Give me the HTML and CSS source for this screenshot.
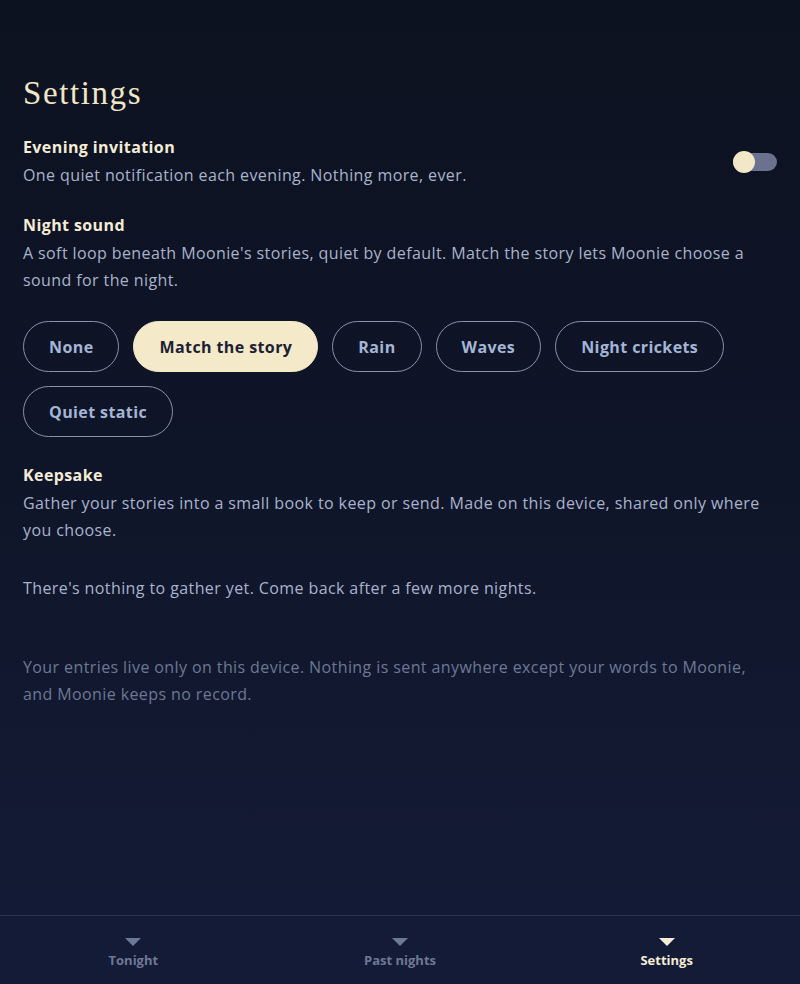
FILE: index.html
```html
<!DOCTYPE html>
<html lang="en">
<head>
<meta charset="utf-8">
<title>Settings</title>
<link rel="stylesheet" href="styles.css">
</head>
<body>
<div class="app">
  <main class="content">
    <h1 class="page-title">Settings</h1>

    <section class="setting setting-row">
      <div class="setting-text">
        <h2 class="setting-title">Evening invitation</h2>
        <p class="setting-desc">One quiet notification each evening. Nothing more, ever.</p>
      </div>
      <div class="toggle" role="switch" aria-checked="false">
        <span class="toggle-knob"></span>
      </div>
    </section>

    <section class="setting">
      <h2 class="setting-title">Night sound</h2>
      <p class="setting-desc">A soft loop beneath Moonie's stories, quiet by default. Match the story lets Moonie choose a sound for the night.</p>
      <div class="chips">
        <button class="chip">None</button>
        <button class="chip chip-active">Match the story</button>
        <button class="chip">Rain</button>
        <button class="chip">Waves</button>
        <button class="chip">Night crickets</button>
        <button class="chip">Quiet static</button>
      </div>
    </section>

    <section class="setting keepsake">
      <h2 class="setting-title">Keepsake</h2>
      <p class="setting-desc">Gather your stories into a small book to keep or send. Made on this device, shared only where you choose.</p>
      <p class="setting-desc empty-note">There's nothing to gather yet. Come back after a few more nights.</p>
    </section>

    <p class="privacy">Your entries live only on this device. Nothing is sent anywhere except your words to Moonie, and Moonie keeps no record.</p>
  </main>

  <nav class="tabbar">
    <a class="tab"><span class="tab-icon"></span><span class="tab-label">Tonight</span></a>
    <a class="tab"><span class="tab-icon"></span><span class="tab-label">Past nights</span></a>
    <a class="tab tab-active"><span class="tab-icon"></span><span class="tab-label">Settings</span></a>
  </nav>
</div>
</body>
</html>
```

FILE: styles.css
```css
* { box-sizing: border-box; }

html, body {
  margin: 0;
  padding: 0;
}

body {
  font-family: "Open Sans", "Noto Sans", sans-serif;
  color: #a9b3cc;
  background: linear-gradient(180deg, #0d1220 0%, #0f1528 45%, #141b37 100%);
  min-height: 984px;
}

.app {
  height: 984px;
  display: flex;
  flex-direction: column;
}

.content {
  flex: 1;
  padding: 73px 23px 0 23px;
}

.page-title {
  margin: 0;
  font-family: "Liberation Serif", "DejaVu Serif", serif;
  font-weight: 400;
  font-size: 33px;
  line-height: 40px;
  letter-spacing: 1.6px;
  color: #f1e6c6;
}

.setting {
  margin-top: 24px;
}

.page-title + .setting {
  margin-top: 22px;
}

.setting-row {
  display: flex;
  align-items: center;
  justify-content: space-between;
}

.setting-title {
  margin: 0;
  font-size: 16px;
  line-height: 24px;
  font-weight: 700;
  letter-spacing: 0.4px;
  color: #f4ecd6;
}

.setting-desc {
  margin: 3px 0 0 0;
  font-size: 16px;
  line-height: 27px;
  letter-spacing: 0.4px;
  color: #a9b3cc;
}

.toggle {
  position: relative;
  width: 44px;
  height: 18px;
  border-radius: 9px;
  background: #6b7290;
  flex-shrink: 0;
}

.toggle-knob {
  position: absolute;
  left: 0;
  top: -2px;
  width: 22px;
  height: 22px;
  border-radius: 50%;
  background: #f2e8c8;
}

.chips {
  margin-top: 27px;
  display: flex;
  flex-wrap: wrap;
  gap: 14px;
}

.chip {
  font-family: inherit;
  font-size: 16px;
  font-weight: 700;
  letter-spacing: 0.4px;
  height: 51px;
  padding: 0 25px;
  border-radius: 26px;
  border: 1.5px solid #8a91a9;
  background: transparent;
  color: #a4b5d6;
}

.chip-active {
  background: #f4e9c8;
  border-color: #f4e9c8;
  color: #1b2135;
}

.keepsake {
  margin-top: 26px;
}

.empty-note {
  margin-top: 31px;
}

.privacy {
  margin: 52px 0 0 0;
  max-width: 740px;
  font-size: 16px;
  line-height: 27px;
  letter-spacing: 0.4px;
  color: #6d7894;
}

.tabbar {
  height: 69px;
  border-top: 1.5px solid #2a3252;
  background: #141b37;
  display: grid;
  grid-template-columns: 1fr 1fr 1fr;
}

.tab {
  display: flex;
  flex-direction: column;
  align-items: center;
  padding-top: 22px;
  gap: 6px;
  color: #6d7894;
  text-decoration: none;
}

.tab-icon {
  width: 0;
  height: 0;
  border-left: 8px solid transparent;
  border-right: 8px solid transparent;
  border-top: 8px solid #6d7894;
}

.tab-label {
  font-size: 13px;
  line-height: 16px;
  font-weight: 700;
}

.tab-active {
  color: #f4ecd6;
}

.tab-active .tab-icon {
  border-top-color: #f4ecd6;
}
```
